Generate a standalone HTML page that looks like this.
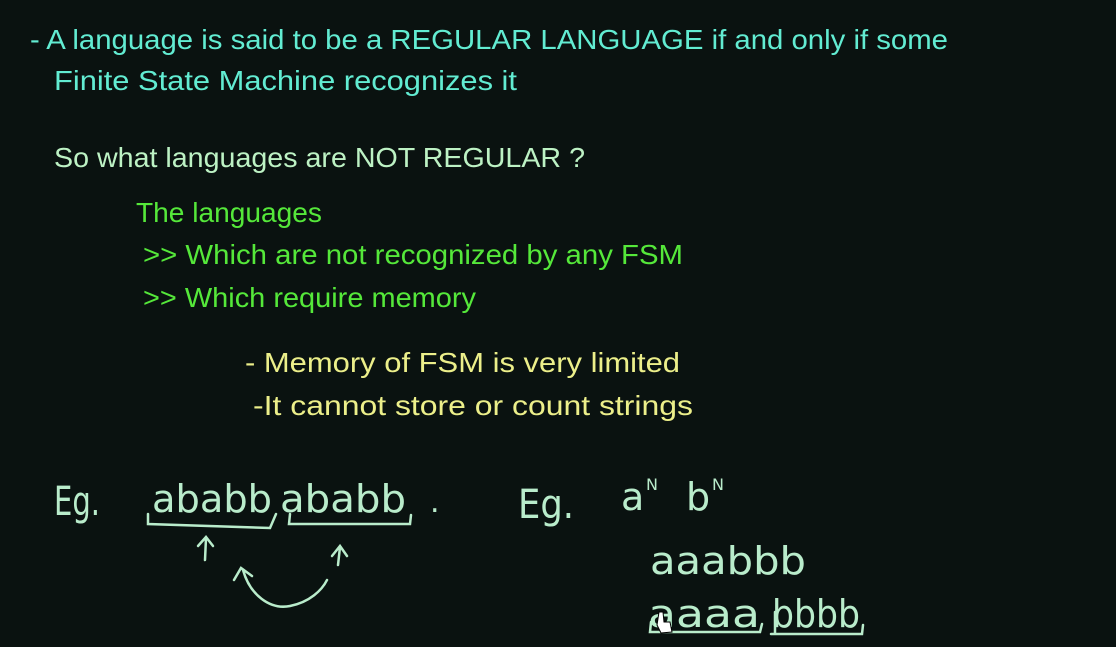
<!DOCTYPE html>
<html><head><meta charset="utf-8"><style>
html,body{margin:0;padding:0;background:#0a1210;}
svg{display:block}
text{font-family:"Liberation Sans",sans-serif;font-size:28px}
.h{font-family:"DejaVu Sans",sans-serif;font-weight:normal;fill:#b9eccb}
</style></head><body>
<svg width="1116" height="647" viewBox="0 0 1116 647">
<rect width="1116" height="647" fill="#0a1210"/>
<g fill="#62ecd2">
<text x="30" y="49" textLength="918" lengthAdjust="spacingAndGlyphs">- A language is said to be a REGULAR LANGUAGE if and only if some</text>
<text x="54" y="90" textLength="463" lengthAdjust="spacingAndGlyphs">Finite State Machine recognizes it</text>
</g>
<text x="54" y="167" fill="#bdf2c4" textLength="531" lengthAdjust="spacingAndGlyphs">So what languages are NOT REGULAR ?</text>
<g fill="#55e83a">
<text x="136" y="222" textLength="186" lengthAdjust="spacingAndGlyphs">The languages</text>
<text x="143" y="264" textLength="540" lengthAdjust="spacingAndGlyphs">&gt;&gt; Which are not recognized by any FSM</text>
<text x="143" y="307" textLength="333" lengthAdjust="spacingAndGlyphs">&gt;&gt; Which require memory</text>
</g>
<g fill="#ecef8a">
<text x="245" y="372" textLength="435" lengthAdjust="spacingAndGlyphs">- Memory of FSM is very limited</text>
<text x="253" y="415" textLength="440" lengthAdjust="spacingAndGlyphs">-It cannot store or count strings</text>
</g>
<g class="h">
<text class="h" x="54" y="515" style="font-size:40px" textLength="46" lengthAdjust="spacingAndGlyphs">Eg.</text>
<text class="h" x="152" y="512" style="font-size:38px" textLength="120" lengthAdjust="spacingAndGlyphs">ababb</text>
<text class="h" x="280" y="512" style="font-size:38px" textLength="126" lengthAdjust="spacingAndGlyphs">ababb</text>
<text class="h" x="430" y="512" style="font-size:30px">.</text>
<text class="h" x="518" y="518" style="font-size:40px" textLength="56" lengthAdjust="spacingAndGlyphs">Eg.</text>
<text class="h" x="621" y="510" style="font-size:38px">a</text>
<text class="h" x="646" y="490" style="font-size:16px">N</text>
<text class="h" x="686" y="510" style="font-size:38px">b</text>
<text class="h" x="712" y="490" style="font-size:16px">N</text>
<text class="h" x="650" y="574" style="font-size:38px" textLength="156" lengthAdjust="spacingAndGlyphs">aaabbb</text>
<text class="h" x="648" y="627" style="font-size:38px" textLength="112" lengthAdjust="spacingAndGlyphs">aaaa</text>
<text class="h" x="772" y="627" style="font-size:38px" textLength="88" lengthAdjust="spacingAndGlyphs">bbbb</text>
</g>
<g fill="none" stroke="#b9eccb" stroke-width="2.5" stroke-linecap="round">
<path d="M148 514 L148 524 L270 528 L276 514"/>
<path d="M290 514 L289 524 L410 524 L411 515"/>
<path d="M205 560 L206 538 M198 546 L206 537 L213 546"/>
<path d="M338 565 L340 547 M332 556 L340 546 L347 556"/>
<path d="M243 570 C250 595 270 610 290 606 C310 602 322 590 327 580 M234 580 L241 568 L252 576"/>
<path d="M651 622 L650 632 L760 632 L762 624"/>
<path d="M775 612 L775 634 M771 634 L862 634 L863 625"/>
</g>
<path d="M659 612 L663 612 L664 622 L670 622 L672 632 L661 633 L657 625 Z" fill="#fff" stroke="#000" stroke-width="1"/>
</svg>
</body></html>
